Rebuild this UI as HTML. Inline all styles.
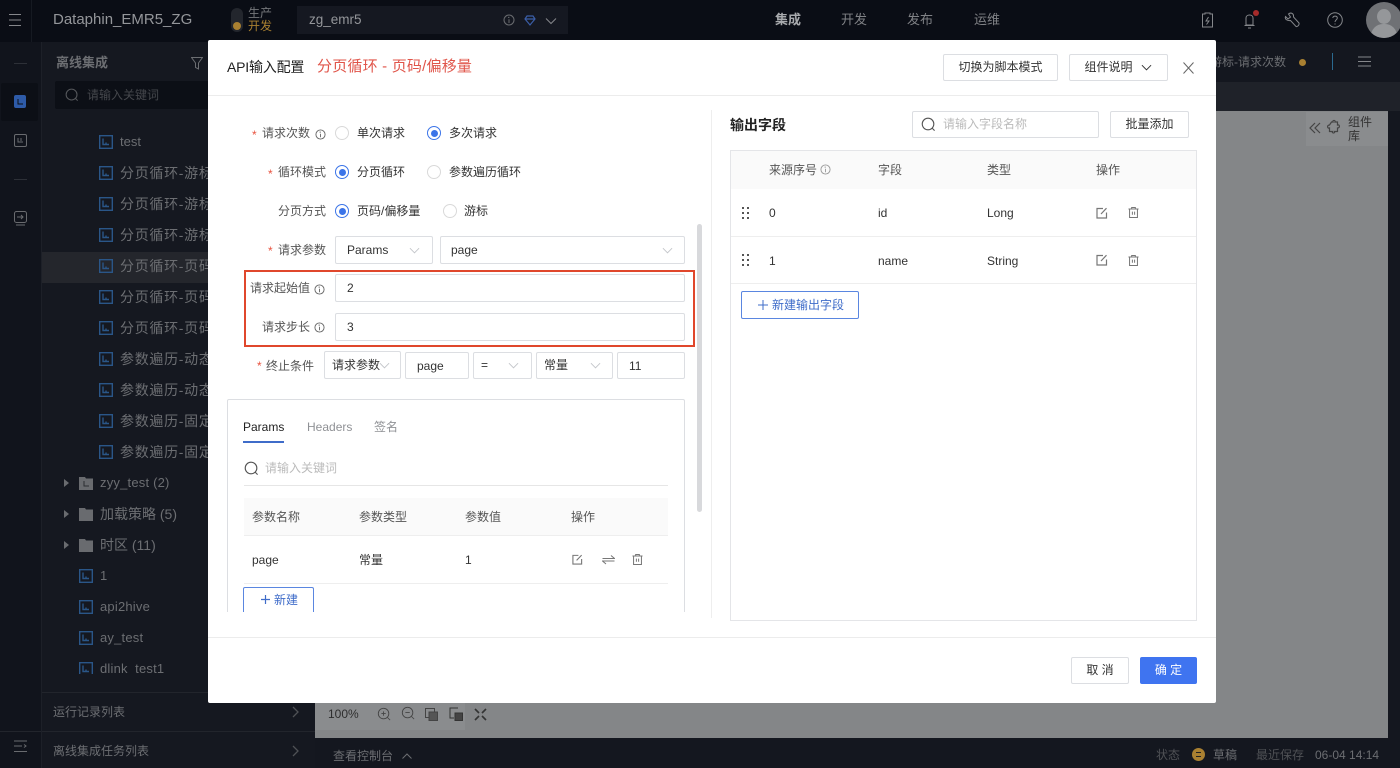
<!DOCTYPE html>
<html><head><meta charset="utf-8"><style>
*{box-sizing:border-box}
html,body{margin:0;width:1400px;height:768px;overflow:hidden;background:#14171f}
body{font-family:"Liberation Sans","Noto Sans CJK SC",sans-serif;position:relative}
.a,.t,svg.i{position:absolute}
.t{white-space:nowrap;line-height:20px;height:20px;font-size:12px;color:#333}
.tr{color:#6c6e72;font-size:14px;letter-spacing:.7px}
.tl{color:#6c6e72;font-size:13px;letter-spacing:.2px}
.tz{color:#6c6e72;font-size:14px;letter-spacing:0}
.box{position:absolute;border:1px solid #dcdee2;background:#fff;border-radius:2px}
.btn{position:absolute;border:1px solid #dcdee2;background:#fff;border-radius:2px;text-align:center;font-size:12px;color:#333}
svg{fill:none;stroke:currentColor;stroke-width:1}
.star{color:#e8533f}
.lb{color:#555}
.r{position:absolute;width:14px;height:14px;border-radius:50%;border:1px solid #d9d9d9;background:#fff}
.r.on{border-color:#3b74e8}
.r.on:after{content:"";position:absolute;left:2.5px;top:2.5px;width:7px;height:7px;border-radius:50%;background:#3b74e8}
</style></head><body>
<svg width="0" height="0" style="position:absolute"><defs>
<symbol id="f" viewBox="0 0 14 14"><rect x=".7" y=".7" width="12.6" height="12.6" stroke="#2a5688" stroke-width="1.4"/><path d="M4 3.5V9.5H10M7 7.5V9" stroke="#2a5688" stroke-width="1.4"/></symbol>
<symbol id="chev" viewBox="0 0 12 12"><path d="M1 3.5L6 8.5L11 3.5"/></symbol>
<symbol id="info" viewBox="0 0 12 12"><circle cx="6" cy="6" r="5"/><path d="M6 5.2V9M5 3.4H6.4" /></symbol>
<symbol id="search" viewBox="0 0 16 16"><circle cx="7.5" cy="7.5" r="6.2" stroke-width="1.2"/><path d="M12 12L14.5 14.5" stroke-width="1.2"/></symbol>
<symbol id="edit" viewBox="0 0 12 12"><path d="M10.5 5.5V11H1V1.5H7M5 7L10.5 1.2" stroke-width="1.2"/></symbol>
<symbol id="del" viewBox="0 0 12 12"><path d="M0.5 2.2H11.5M4 2V.5H8V2M1.7 2.2V11.5H10.3V2.2M4.8 5V8.5M7.2 5V8.5" stroke-width="1.1"/></symbol>
<symbol id="drag" viewBox="0 0 8 12"><g fill="#555" stroke="none"><rect x="0" y="0" width="2" height="2"/><rect x="5" y="0" width="2" height="2"/><rect x="0" y="5" width="2" height="2"/><rect x="5" y="5" width="2" height="2"/><rect x="0" y="10" width="2" height="2"/><rect x="5" y="10" width="2" height="2"/></g></symbol>
<symbol id="fold" viewBox="0 0 14 14"><path d="M0 1H6L7 2.500H14V14H0Z" fill="#696b6f" stroke="none"/></symbol>
</defs></svg>

<!-- top bar -->
<div class="a" style="left:0;top:0;width:1400px;height:42px;background:#0a0d15"></div>
<div class="a" style="left:31px;top:0;width:1px;height:42px;background:#161a22"></div>
<svg class="i" style="left:9px;top:13px;color:#85878b" width="12" height="14" viewBox="0 0 12 14"><path d="M0 1.500H12M0 7H12M0 12.500H12"/></svg>
<div class="t" style="left:53px;top:10px;font-size:15px;color:#94969a">Dataphin_EMR5_ZG</div>
<div class="a" style="left:231px;top:8px;width:12px;height:24px;border-radius:6px;background:#23262d"></div>
<div class="a" style="left:233px;top:22px;width:8px;height:8px;border-radius:50%;background:#a98031"></div>
<div class="t" style="left:248px;top:3px;color:#75777b">生产</div>
<div class="t" style="left:248px;top:16px;color:#a98031">开发</div>
<div class="a" style="left:297px;top:6px;width:271px;height:28px;background:#151821"></div>
<div class="t" style="left:309px;top:10px;color:#94969a;font-size:13.500px">zg_emr5</div>
<svg class="i" style="left:503px;top:14px;color:#6a6c70" width="12" height="12"><use href="#info"/></svg>
<svg class="i" style="left:524px;top:15px;color:#3b5ea8" width="12" height="11" viewBox="0 0 12 11"><path d="M3 1H9L11 4L6 10L1 4ZM1 4H11" stroke-width="1.2"/></svg>
<svg class="i" style="left:545px;top:15px;color:#85878b" width="12" height="12"><use href="#chev"/></svg>
<div class="t" style="left:775px;top:10px;font-size:13px;font-weight:bold;color:#a8aaad">集成</div>
<div class="t" style="left:841px;top:10px;font-size:13px;color:#808286">开发</div>
<div class="t" style="left:907px;top:10px;font-size:13px;color:#808286">发布</div>
<div class="t" style="left:974px;top:10px;font-size:13px;color:#808286">运维</div>
<svg class="i" style="left:1201px;top:12px;color:#85878b" width="13" height="16" viewBox="0 0 13 16"><path d="M4 2V1H9V2H11.500V15H1.500V2ZM7.500 5L5 9H8L5.500 12.500"/></svg>
<svg class="i" style="left:1243px;top:13px;color:#85878b" width="14" height="16" viewBox="0 0 14 16"><path d="M3 12V5C3 1 10 1 10 5V12ZM1.500 12.500H11.500M5 15H8"/></svg>
<div class="a" style="left:1253px;top:10px;width:6px;height:6px;border-radius:50%;background:#a52a2a"></div>
<svg class="i" style="left:1284px;top:12px;color:#85878b" width="16" height="16" viewBox="0 0 16 16"><path d="M1.500 4.500L4 7L6.500 5L4.500 2C7 0 10 1.500 9.500 5L15 11C15.500 13 13.500 15 12 14.500L6.500 8.500C3 9 .5 7 1.500 4.500Z"/></svg>
<svg class="i" style="left:1327px;top:12px;color:#85878b" width="16" height="16" viewBox="0 0 16 16"><circle cx="8" cy="8" r="7.300"/><path d="M5.800 6C6 3.500 10.300 3.500 10.300 6C10.300 8 8 7.800 8 10M8 11.500V12.500"/></svg>
<div class="a" style="left:1366px;top:2px;width:36px;height:36px;border-radius:50%;background:#6f7175;overflow:hidden"><div class="a" style="left:11px;top:7px;width:14px;height:15px;border-radius:50%;background:#95979a"></div><div class="a" style="left:5px;top:22px;width:26px;height:18px;border-radius:12px 12px 0 0;background:#95979a"></div></div>

<!-- sidebars -->
<div class="a" style="left:0;top:42px;width:41px;height:726px;background:#11141c"></div>
<div class="a" style="left:41px;top:42px;width:1px;height:726px;background:#1d2028"></div>
<div class="a" style="left:42px;top:42px;width:273px;height:726px;background:#151820"></div>
<div class="a" style="left:14px;top:63px;width:13px;height:1px;background:#2d3037"></div>
<div class="a" style="left:1px;top:83px;width:37px;height:38px;background:#0c0f16;border-radius:2px"></div>
<div class="a" style="left:14px;top:95px;width:12px;height:13px;background:#2e5ba8;border-radius:2px"></div>
<svg class="i" style="left:17px;top:98px;color:#0c0f16" width="7" height="7"><path d="M1 1V6H6"/></svg>
<div class="a" style="left:14px;top:134px;width:13px;height:13px;border:1px solid #696b6f;border-radius:2px"></div>
<svg class="i" style="left:17px;top:137px;color:#696b6f" width="7" height="7"><path d="M1 1V5H6M4 1V4"/></svg>
<div class="a" style="left:14px;top:179px;width:13px;height:1px;background:#2d3037"></div>
<svg class="i" style="left:14px;top:211px;color:#696b6f" width="13" height="15" viewBox="0 0 13 15"><rect x=".5" y=".5" width="12" height="11" rx="2"/><path d="M3 6H9M7 4L9 6L7 8M2 14H11"/></svg>
<svg class="i" style="left:14px;top:740px;color:#696b6f" width="13" height="13" viewBox="0 0 13 13"><path d="M0 1H13M0 6H8M0 11.500H13M10 4.500L12 6L10 7.500"/></svg>
<div class="t" style="left:56px;top:53px;font-size:13px;font-weight:bold;color:#6c6e72">离线集成</div>
<svg class="i" style="left:191px;top:57px;color:#6c6e72" width="12" height="13" viewBox="0 0 12 13"><path d="M.5 .5H11.500L7.500 6V12L4.500 10.500V6Z"/></svg>
<div class="a" style="left:55px;top:81px;width:160px;height:28px;background:#0c0f16;border-radius:2px"></div>
<svg class="i" style="left:65px;top:88px;color:#55575b" width="14" height="14"><use href="#search"/></svg>
<div class="t" style="left:87px;top:85px;color:#45474c">请输入关键词</div>
<div class="a" style="left:42px;top:252px;width:173px;height:31px;background:#24262c"></div>
<div class="a" style="left:42px;top:127px;width:173px;height:547px;overflow:hidden">
<div class="a" style="left:0;top:0;width:173px;height:547px">
<svg class="i" style="left:57px;top:8px" width="14" height="14"><use href="#f"/></svg><div class="t tl" style="left:78px;top:5px;letter-spacing:0">test</div>
<svg class="i" style="left:57px;top:39px" width="14" height="14"><use href="#f"/></svg><div class="t tr" style="left:78px;top:36px">分页循环-游标</div>
<svg class="i" style="left:57px;top:70px" width="14" height="14"><use href="#f"/></svg><div class="t tr" style="left:78px;top:67px">分页循环-游标</div>
<svg class="i" style="left:57px;top:101px" width="14" height="14"><use href="#f"/></svg><div class="t tr" style="left:78px;top:98px">分页循环-游标</div>
<svg class="i" style="left:57px;top:132px" width="14" height="14"><use href="#f"/></svg><div class="t tr" style="left:78px;top:129px">分页循环-页码</div>
<svg class="i" style="left:57px;top:163px" width="14" height="14"><use href="#f"/></svg><div class="t tr" style="left:78px;top:160px">分页循环-页码</div>
<svg class="i" style="left:57px;top:194px" width="14" height="14"><use href="#f"/></svg><div class="t tr" style="left:78px;top:191px">分页循环-页码</div>
<svg class="i" style="left:57px;top:225px" width="14" height="14"><use href="#f"/></svg><div class="t tr" style="left:78px;top:222px">参数遍历-动态</div>
<svg class="i" style="left:57px;top:256px" width="14" height="14"><use href="#f"/></svg><div class="t tr" style="left:78px;top:253px">参数遍历-动态</div>
<svg class="i" style="left:57px;top:287px" width="14" height="14"><use href="#f"/></svg><div class="t tr" style="left:78px;top:284px">参数遍历-固定</div>
<svg class="i" style="left:57px;top:318px" width="14" height="14"><use href="#f"/></svg><div class="t tr" style="left:78px;top:315px">参数遍历-固定</div>
<div class="a" style="left:22px;top:352px;border-left:5px solid #696b6f;border-top:4px solid transparent;border-bottom:4px solid transparent"></div>
<svg class="i" style="left:37px;top:349px" width="14" height="14"><use href="#fold"/></svg>
<svg class="i" style="left:41px;top:354px;color:#2a2c31" width="6" height="6"><path d="M1 0V5H6"/></svg>
<div class="t tl" style="left:58px;top:346px">zyy_test (2)</div>
<div class="a" style="left:22px;top:383px;border-left:5px solid #696b6f;border-top:4px solid transparent;border-bottom:4px solid transparent"></div>
<svg class="i" style="left:37px;top:380px" width="14" height="14"><use href="#fold"/></svg><div class="t tz" style="left:58px;top:377px">加载策略 (5)</div>
<div class="a" style="left:22px;top:414px;border-left:5px solid #696b6f;border-top:4px solid transparent;border-bottom:4px solid transparent"></div>
<svg class="i" style="left:37px;top:411px" width="14" height="14"><use href="#fold"/></svg><div class="t tz" style="left:58px;top:408px">时区 (11)</div>
<svg class="i" style="left:37px;top:442px" width="14" height="14"><use href="#f"/></svg><div class="t tl" style="left:58px;top:439px">1</div>
<svg class="i" style="left:37px;top:473px" width="14" height="14"><use href="#f"/></svg><div class="t tl" style="left:58px;top:470px">api2hive</div>
<svg class="i" style="left:37px;top:504px" width="14" height="14"><use href="#f"/></svg><div class="t tl" style="left:58px;top:501px">ay_test</div>
<svg class="i" style="left:37px;top:535px" width="14" height="14"><use href="#f"/></svg><div class="t tl" style="left:58px;top:532px">dlink_test1</div>
</div></div>
<div class="a" style="left:42px;top:692px;width:273px;height:1px;background:#22252c"></div>
<div class="a" style="left:42px;top:731px;width:273px;height:1px;background:#22252c"></div>
<div class="a" style="left:0;top:731px;width:41px;height:1px;background:#22252c"></div>
<div class="t" style="left:53px;top:702px;color:#6c6e72">运行记录列表</div>
<div class="t" style="left:53px;top:741px;color:#6c6e72">离线集成任务列表</div>
<svg class="i" style="left:292px;top:706px;color:#4f5155" width="8" height="12"><path d="M1 1L6 6L1 11" stroke-width="1.300"/></svg>
<svg class="i" style="left:292px;top:745px;color:#4f5155" width="8" height="12"><path d="M1 1L6 6L1 11" stroke-width="1.300"/></svg>

<!-- main right -->
<div class="a" style="left:315px;top:42px;width:1085px;height:40px;background:#14171f"></div>
<div class="a" style="left:315px;top:82px;width:1085px;height:29px;background:#1f2229"></div>
<div class="a" style="left:315px;top:111px;width:1073px;height:627px;background:#848688"></div>
<div class="a" style="left:1388px;top:111px;width:12px;height:627px;background:#14171f"></div>
<div class="a" style="left:315px;top:703px;width:150px;height:27px;background:#8a8c8e"></div>
<div class="a" style="left:1306px;top:112px;width:82px;height:34px;background:#8a8c8e"></div>
<div class="t" style="left:1210px;top:52px;color:#6c6e72">游标-请求次数</div>
<div class="a" style="left:1299px;top:59px;width:7px;height:7px;border-radius:50%;background:#a98031"></div>
<div class="a" style="left:1332px;top:53px;width:1px;height:17px;background:#2b6a90"></div>
<svg class="i" style="left:1358px;top:56px;color:#85878b" width="13" height="11"><path d="M0 1H13M0 5.500H13M0 10H13"/></svg>
<svg class="i" style="left:1309px;top:122px;color:#444" width="12" height="12"><path d="M6 1L1 6L6 11M11 1L6 6L11 11" stroke-width="1.200"/></svg>
<svg class="i" style="left:1326px;top:119px;color:#444" width="16" height="16" viewBox="0 0 16 16"><path d="M5.500 3H7C6 1 10 1 9 3H11.500V6C13.500 5 14.500 9 11.500 9V12.500H8.500C9.500 14.500 5.500 14.500 6.500 12.500H3.500V9C1.500 10 .5 6 3.500 6Z" stroke-width="1.200"/></svg>
<div class="t" style="left:1348px;top:115px;line-height:14px;height:28px;color:#333;white-space:normal;width:26px">组件库</div>
<div class="t" style="left:328px;top:704px;color:#2e2e2e">100%</div>
<svg class="i" style="left:377px;top:707px;color:#444" width="14" height="14" viewBox="0 0 16 16"><circle cx="7.500" cy="7.500" r="6"/><path d="M12 12L15 15M5 7.500H10M7.500 5V10"/></svg>
<svg class="i" style="left:401px;top:706px;color:#444" width="14" height="14" viewBox="0 0 16 16"><circle cx="7.500" cy="7.500" r="6"/><path d="M12 12L15 15M5 7.500H10"/></svg>
<svg class="i" style="left:425px;top:708px;color:#444" width="13" height="13" viewBox="0 0 13 13"><rect x=".5" y=".5" width="9" height="9"/><rect x="4" y="4" width="8.500" height="8.500" fill="#555"/></svg>
<svg class="i" style="left:449px;top:707px;color:#333" width="14" height="14" viewBox="0 0 14 14"><path d="M9 1H1V11H5"/><rect x="6" y="6" width="7.500" height="7.500" fill="#444"/></svg>
<svg class="i" style="left:474px;top:708px;color:#333" width="13" height="13" viewBox="0 0 13 13"><path d="M1 1L5 5M12 1L8 5M1 12L5 8M12 12L8 8" stroke-width="1.600"/></svg>
<div class="t" style="left:333px;top:746px;color:#6c6e72">查看控制台</div>
<svg class="i" style="left:401px;top:752px;color:#6c6e72" width="12" height="8"><path d="M1.500 6.500L6 2L10.500 6.500"/></svg>
<div class="t" style="left:1156px;top:745px;color:#4f5155">状态</div>
<div class="a" style="left:1192px;top:748px;width:13px;height:13px;border-radius:50%;background:#a98031"></div>
<div class="a" style="left:1196px;top:752px;width:5px;height:5px;border-top:1px solid #222;border-bottom:1px solid #222"></div>
<div class="t" style="left:1213px;top:745px;color:#6c6e72">草稿</div>
<div class="t" style="left:1256px;top:745px;color:#4f5155">最近保存</div>
<div class="t" style="left:1315px;top:745px;color:#6c6e72">06-04 14:14</div>

<!-- modal -->
<div class="a" style="left:208px;top:40px;width:1008px;height:663px;background:#fff;border-radius:2px"></div>
<div class="a" style="left:208px;top:95px;width:1008px;height:1px;background:#ececec"></div>
<div class="a" style="left:208px;top:637px;width:1008px;height:1px;background:#ececec"></div>
<div class="a" style="left:711px;top:110px;width:1px;height:508px;background:#eee"></div>
<div class="t" style="left:227px;top:57px;font-size:14px;color:#222;letter-spacing:-.2px">API输入配置</div>
<div class="t" style="left:317px;top:57px;font-size:15px;color:#e0554a;letter-spacing:.2px">分页循环 - 页码/偏移量</div>
<div class="btn" style="left:943px;top:54px;width:115px;height:27px;line-height:25px">切换为脚本模式</div>
<div class="btn" style="left:1069px;top:54px;width:99px;height:27px;line-height:25px;padding-right:20px">组件说明</div>
<svg class="i" style="left:1141px;top:62px;color:#333" width="11" height="11" viewBox="0 0 12 12"><use href="#chev"/></svg>
<svg class="i" style="left:1183px;top:62px;color:#666" width="11" height="12" viewBox="0 0 11 12"><path d="M.5 .5L10.500 11.500M10.500 .5L.5 11.500"/></svg>

<!-- form -->
<div class="t star" style="left:252px;top:125px">*</div><div class="t lb" style="left:262px;top:123px">请求次数</div>
<svg class="i" style="left:315px;top:129px;color:#666" width="11" height="11" viewBox="0 0 12 12"><use href="#info"/></svg>
<div class="r" style="left:335px;top:126px"></div><div class="t" style="left:357px;top:123px">单次请求</div>
<div class="r on" style="left:427px;top:126px"></div><div class="t" style="left:449px;top:123px">多次请求</div>
<div class="t star" style="left:268px;top:164px">*</div><div class="t lb" style="left:278px;top:162px">循环模式</div>
<div class="r on" style="left:335px;top:165px"></div><div class="t" style="left:357px;top:162px">分页循环</div>
<div class="r" style="left:427px;top:165px"></div><div class="t" style="left:449px;top:162px">参数遍历循环</div>
<div class="t lb" style="left:278px;top:201px">分页方式</div>
<div class="r on" style="left:335px;top:204px"></div><div class="t" style="left:357px;top:201px">页码/偏移量</div>
<div class="r" style="left:443px;top:204px"></div><div class="t" style="left:464px;top:201px">游标</div>
<div class="a" style="left:697px;top:224px;width:5px;height:288px;background:#d8d9dc;border-radius:3px"></div>
<div class="t star" style="left:268px;top:241px">*</div><div class="t lb" style="left:278px;top:240px">请求参数</div>
<div class="box" style="left:335px;top:236px;width:98px;height:28px"></div><div class="t" style="left:347px;top:240px">Params</div>
<svg class="i" style="left:409px;top:245px;color:#c4c6ca" width="11" height="11" viewBox="0 0 12 12"><use href="#chev"/></svg>
<div class="box" style="left:440px;top:236px;width:245px;height:28px"></div><div class="t" style="left:451px;top:240px">page</div>
<svg class="i" style="left:662px;top:245px;color:#c4c6ca" width="11" height="11" viewBox="0 0 12 12"><use href="#chev"/></svg>
<div class="a" style="left:244px;top:270px;width:451px;height:77px;border:2px solid #e0472c"></div>
<div class="t lb" style="left:250px;top:278px">请求起始值</div>
<svg class="i" style="left:314px;top:284px;color:#666" width="11" height="11" viewBox="0 0 12 12"><use href="#info"/></svg>
<div class="box" style="left:335px;top:274px;width:350px;height:28px"></div><div class="t" style="left:347px;top:278px">2</div>
<div class="t lb" style="left:262px;top:317px">请求步长</div>
<svg class="i" style="left:314px;top:322px;color:#666" width="11" height="11" viewBox="0 0 12 12"><use href="#info"/></svg>
<div class="box" style="left:335px;top:313px;width:350px;height:28px"></div><div class="t" style="left:347px;top:317px">3</div>
<div class="t star" style="left:257px;top:356px">*</div><div class="t lb" style="left:266px;top:356px">终止条件</div>
<div class="box" style="left:324px;top:351px;width:77px;height:28px"></div><div class="t" style="left:332px;top:355px">请求参数</div>
<svg class="i" style="left:379px;top:360px;color:#c4c6ca" width="11" height="11" viewBox="0 0 12 12"><use href="#chev"/></svg>
<div class="box" style="left:405px;top:352px;width:64px;height:27px"></div><div class="t" style="left:417px;top:356px">page</div>
<div class="box" style="left:473px;top:352px;width:59px;height:27px"></div><div class="t" style="left:481px;top:355px">=</div>
<svg class="i" style="left:508px;top:360px;color:#c4c6ca" width="11" height="11" viewBox="0 0 12 12"><use href="#chev"/></svg>
<div class="box" style="left:536px;top:352px;width:77px;height:27px"></div><div class="t" style="left:544px;top:355px">常量</div>
<svg class="i" style="left:590px;top:360px;color:#c4c6ca" width="11" height="11" viewBox="0 0 12 12"><use href="#chev"/></svg>
<div class="box" style="left:617px;top:352px;width:68px;height:27px"></div><div class="t" style="left:629px;top:356px">11</div>

<!-- params card -->
<div class="a" style="left:227px;top:399px;width:458px;height:213px;border:1px solid #dcdee2;border-bottom:0;border-radius:2px 2px 0 0"></div>
<div class="t" style="left:243px;top:417px;color:#222">Params</div>
<div class="a" style="left:243px;top:441px;width:41px;height:2px;background:#3f6cc9"></div>
<div class="t" style="left:307px;top:417px;color:#8f9195">Headers</div>
<div class="t" style="left:374px;top:417px;color:#8f9195">签名</div>
<svg class="i" style="left:244px;top:461px;color:#555" width="15" height="15" viewBox="0 0 16 16"><use href="#search"/></svg>
<div class="t" style="left:265px;top:458px;color:#bbb">请输入关键词</div>
<div class="a" style="left:244px;top:485px;width:424px;height:1px;background:#e6e6e6"></div>
<div class="a" style="left:244px;top:498px;width:424px;height:38px;background:#fafafa;border-bottom:1px solid #eee"></div>
<div class="t lb" style="left:252px;top:507px">参数名称</div>
<div class="t lb" style="left:359px;top:507px">参数类型</div>
<div class="t lb" style="left:465px;top:507px">参数值</div>
<div class="t lb" style="left:571px;top:507px">操作</div>
<div class="t" style="left:252px;top:550px">page</div>
<div class="t" style="left:359px;top:550px">常量</div>
<div class="t" style="left:465px;top:550px">1</div>
<svg class="i" style="left:572px;top:554px;color:#777" width="11" height="11" viewBox="0 0 12 12"><use href="#edit"/></svg>
<svg class="i" style="left:602px;top:553px;color:#777" width="13" height="13" viewBox="0 0 13 13"><path d="M.5 5.500H12.500L9 2.500M12.500 8H.5L4 11"/></svg>
<svg class="i" style="left:632px;top:553px;color:#777" width="11" height="13" viewBox="0 0 12 12"><use href="#del"/></svg>
<div class="a" style="left:244px;top:583px;width:424px;height:1px;background:#eee"></div>
<div class="a" style="left:243px;top:587px;width:71px;height:25px;border:1px solid #5a86e0;border-bottom:0;border-radius:2px 2px 0 0"></div>
<svg class="i" style="left:261px;top:595px;color:#3f6cc9" width="9" height="9"><path d="M4.500 0V9M0 4.500H9" stroke-width="1.200"/></svg>
<div class="t" style="left:274px;top:590px;color:#3f6cc9">新建</div>
<div class="a" style="left:208px;top:612px;width:500px;height:24px;background:#fff"></div>

<!-- right panel -->
<div class="t" style="left:730px;top:115px;font-size:14px;font-weight:bold;color:#222">输出字段</div>
<div class="box" style="left:912px;top:111px;width:187px;height:27px"></div>
<svg class="i" style="left:921px;top:117px;color:#555" width="15" height="15" viewBox="0 0 16 16"><use href="#search"/></svg>
<div class="t" style="left:943px;top:114px;color:#bbb">请输入字段名称</div>
<div class="btn" style="left:1110px;top:111px;width:79px;height:27px;line-height:25px">批量添加</div>
<div class="a" style="left:730px;top:150px;width:467px;height:471px;border:1px solid #e4e5e8"></div>
<div class="a" style="left:731px;top:151px;width:465px;height:38px;background:#fafafa"></div>
<div class="t lb" style="left:769px;top:160px">来源序号</div>
<svg class="i" style="left:820px;top:164px;color:#999" width="11" height="11" viewBox="0 0 12 12"><use href="#info"/></svg>
<div class="t lb" style="left:878px;top:160px">字段</div>
<div class="t lb" style="left:987px;top:160px">类型</div>
<div class="t lb" style="left:1096px;top:160px">操作</div>
<svg class="i" style="left:742px;top:207px" width="8" height="12"><use href="#drag"/></svg>
<div class="t" style="left:769px;top:203px">0</div><div class="t" style="left:878px;top:203px">id</div><div class="t" style="left:987px;top:203px">Long</div>
<svg class="i" style="left:1096px;top:207px;color:#777" width="12" height="12" viewBox="0 0 12 12"><use href="#edit"/></svg>
<svg class="i" style="left:1128px;top:206px;color:#777" width="11" height="13" viewBox="0 0 12 12"><use href="#del"/></svg>
<div class="a" style="left:731px;top:236px;width:465px;height:1px;background:#eee"></div>
<svg class="i" style="left:742px;top:254px" width="8" height="12"><use href="#drag"/></svg>
<div class="t" style="left:769px;top:251px">1</div><div class="t" style="left:878px;top:251px">name</div><div class="t" style="left:987px;top:251px">String</div>
<svg class="i" style="left:1096px;top:254px;color:#777" width="12" height="12" viewBox="0 0 12 12"><use href="#edit"/></svg>
<svg class="i" style="left:1128px;top:254px;color:#777" width="11" height="13" viewBox="0 0 12 12"><use href="#del"/></svg>
<div class="a" style="left:731px;top:283px;width:465px;height:1px;background:#eee"></div>
<div class="a" style="left:741px;top:291px;width:118px;height:28px;border:1px solid #5a86e0;border-radius:2px"></div>
<svg class="i" style="left:758px;top:300px;color:#3f6cc9" width="10" height="10"><path d="M5 0V10M0 5H10"/></svg>
<div class="t" style="left:772px;top:295px;color:#3f6cc9">新建输出字段</div>
<div class="btn" style="left:1071px;top:657px;width:58px;height:27px;line-height:25px">取 消</div>
<div class="a" style="left:1140px;top:657px;width:57px;height:27px;background:#3f74f0;border-radius:2px;color:#fff;text-align:center;font-size:12px;line-height:27px">确 定</div>
</body></html>
